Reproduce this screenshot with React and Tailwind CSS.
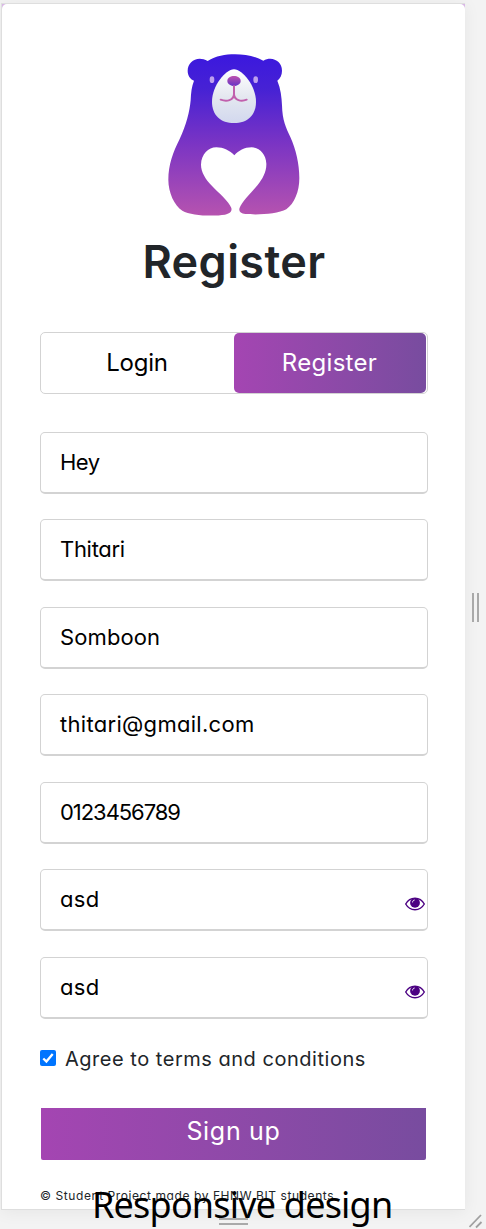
const fields = [
  { name: "username", value: "Hey", spacing: "tracking-[-0.5px]" },
  { name: "firstName", value: "Thitari", spacing: "tracking-[-0.3px]" },
  { name: "lastName", value: "Somboon", spacing: "tracking-[0.1px]" },
  { name: "email", value: "thitari@gmail.com", spacing: "tracking-[0.3px]" },
  { name: "phone", value: "0123456789", spacing: "tracking-[-1.05px]" },
  { name: "password", value: "asd", spacing: "tracking-[0.3px]", secret: true },
  { name: "confirm", value: "asd", spacing: "tracking-[0.3px]", secret: true },
];

function Bear() {
  return (
    <svg viewBox="50 38 402 492" className="h-[164px] w-[134px]" aria-hidden="true">
      <defs>
        <linearGradient id="fur" gradientUnits="userSpaceOnUse" x1="0" y1="42" x2="0" y2="526">
          <stop offset="0" stopColor="#3b18de" />
          <stop offset=".22" stopColor="#4722d4" />
          <stop offset=".55" stopColor="#7a34c4" />
          <stop offset="1" stopColor="#b653af" />
        </linearGradient>
        <linearGradient id="muzzle" x1="0" y1="0" x2="0" y2="1">
          <stop offset="0" stopColor="#ffffff" />
          <stop offset=".5" stopColor="#e5e8f0" />
          <stop offset="1" stopColor="#d2d8ee" />
        </linearGradient>
        <linearGradient id="nose" x1="0" y1="0" x2="0" y2="1">
          <stop offset="0" stopColor="#bd50ae" />
          <stop offset="1" stopColor="#6634c6" />
        </linearGradient>
      </defs>
      <path
        fill="url(#fur)"
        d="M172 62C197 47 224 42 254 42C284 42 314 47 339 61C366 46 395 63 395 91C395 104 390 114 381 121C391 145 394 170 395 195C396 240 407 262 420 290C437 328 447 370 447 414C447 454 432 490 408 507C382 522 320 524 285 521C270 520 264 512 268 502C274 485 306 453 322 434C337 416 349 393 348 370C347 340 325 321 304 321C282 321 265 331 252 345C239 331 219 321 198 321C174 321 153 342 152 373C152 395 166 417 183 435C205 458 236 484 243 503C246 513 238 521 224 523C190 528 122 527 96 511C72 496 54 456 54 418C54 374 68 335 88 296C108 254 118 214 121 180C122 157 124 138 131 121C119 116 112 105 112 91C112 63 142 44 172 62Z"
      />
      <path fill="url(#muzzle)" d="M251 87C277 87 317 138 317 184C317 225 291 248 251 248C211 248 185 225 185 184C185 138 225 87 251 87Z" />
      <ellipse cx="185" cy="118" rx="7" ry="10" fill="#bda0ee" />
      <ellipse cx="316" cy="118" rx="7" ry="10" fill="#bda0ee" />
      <path fill="url(#nose)" d="M231 122C231 102 271 102 271 122C271 132 259 137 251 137C243 137 231 132 231 122Z" />
      <path fill="none" stroke="#c160ad" strokeWidth="6" strokeLinecap="round" d="M251 137V162M211 178C230 185 249 180 251 162C253 180 272 185 289 178" />
    </svg>
  );
}

function Eye() {
  return (
    <svg viewBox="0 0 20 14" className="absolute top-[27px] right-[2px] h-[14px] w-[20px]" aria-hidden="true">
      <path fill="none" stroke="#4b0082" strokeWidth="1.4" d="M.7 7C5 -.9 15 -.9 19.3 7C15 14.6 5 14.6 .7 7Z" />
      <circle cx="10" cy="5.8" r="4.9" fill="#4b0082" />
      <path fill="none" stroke="#ffffff" strokeWidth="1" d="M7.6 5.4C7.6 4 8.3 3.2 9.6 3" />
    </svg>
  );
}

export default function App() {
  return (
    <div className="relative flex h-[1229px] w-[486px] flex-col overflow-hidden bg-[#f3f3f3] pt-[3px] pl-px font-[Inter,'Noto_Sans',sans-serif] [font-feature-settings:'cv11']">
      <div className="h-[1207px] w-[464px] border border-r-0 border-[#dedede] bg-[#d9b8e6] shadow-[0_2px_16px_rgba(0,0,0,0.06)]">
        <main className="flex h-full flex-col rounded-t-[5px] bg-white pr-[37px] pl-[38px]">
          <div className="flex justify-center pt-[49px]">
            <Bear />
          </div>
          <h1 className="mt-[12px] text-center text-[45px] leading-[66px] font-semibold tracking-[0.4px] text-[#212529]">
            <span>Register</span>
          </h1>
          <div className="mt-[37px] flex h-[62px] shrink-0 rounded-[5px] border border-[#d3d3d3] pr-px text-[24px] font-normal">
            <button className="flex w-[193px] items-center justify-center pr-px tracking-[-0.2px] text-black">
              <span>Login</span>
            </button>
            <button className="flex flex-1 items-center justify-center rounded-[5px] bg-linear-to-r from-[#a445b2] to-[#784c9f] pr-px tracking-[0.3px] text-white">
              <span>Register</span>
            </button>
          </div>
          <form className="mt-[37.9px] flex flex-col gap-[25.5px]">
            {fields.map((field) => (
              <div key={field.name} className="relative flex h-[62px] items-center rounded-[5px] border border-b-2 border-[#d3d3d3] pl-[19px] text-[22px] font-normal text-black">
                <span className={field.spacing}>{field.value}</span>
                {field.secret && <Eye />}
              </div>
            ))}
          </form>
          <div className="mt-[23.1px] flex h-[32px] items-center text-[20px] font-normal tracking-[0.52px] text-[#212529]">
            <span className="mr-[9px] flex size-[16px] items-center justify-center rounded-[2px] bg-[#0075ff]">
              <svg viewBox="0 0 16 16" className="size-[16px]" aria-hidden="true">
                <path d="M3.3 8.5L6.4 11.5L12.7 4" fill="none" stroke="#ffffff" strokeWidth="2.3" />
              </svg>
            </span>
            <span className="pt-[2px]">Agree to terms and conditions</span>
          </div>
          <button className="mt-[34px] mr-[2px] ml-px flex h-[52px] shrink-0 items-center justify-center rounded-b-[2px] bg-linear-to-r from-[#a445b2] to-[#784c9f] pb-[5px] text-[25px] tracking-[0.7px] text-white">
            <span>Sign up</span>
          </button>
          <footer className="mt-[26px] text-[12px] leading-[20px] font-normal tracking-[0.58px] text-[#212529]">
            <span>© Student Project made by FHNW BIT students</span>
          </footer>
        </main>
      </div>
      <svg viewBox="0 0 8 30" className="absolute top-[593px] left-[472px] h-[30px] w-[8px]" aria-hidden="true">
        <path d="M1 0V29M6 0V29" stroke="#a9a9a9" strokeWidth="2" />
      </svg>
      <svg viewBox="0 0 30 8" className="absolute top-[1218px] left-[219px] h-[8px] w-[30px]" aria-hidden="true">
        <path d="M0 1H29M0 6H29" stroke="#a9a9a9" strokeWidth="2" />
      </svg>
      <svg viewBox="0 0 14 16" className="absolute top-[1213px] left-[469px] h-[16px] w-[14px]" aria-hidden="true">
        <path d="M.5 14L12 2M7 14.5L12.5 9" stroke="#a0a0a0" strokeWidth="1.8" />
      </svg>
      <p className="absolute top-[1180px] left-[92px] font-['Noto_Sans',sans-serif] text-[36px] leading-[49px] tracking-[-0.8px] whitespace-nowrap text-black">
        Responsive design
      </p>
    </div>
  );
}
